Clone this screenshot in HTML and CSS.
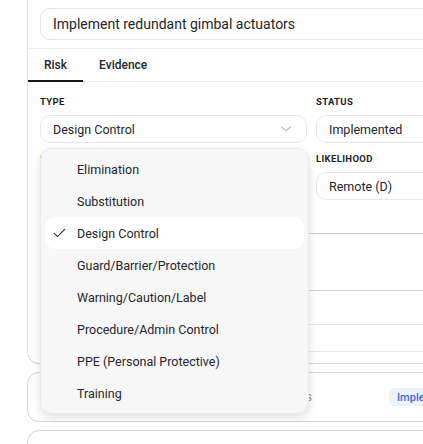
FILE: index.html
```html
<!DOCTYPE html>
<html lang="en">
<head>
    <meta charset="UTF-8">
    <meta name="viewport" content="width=device-width, initial-scale=1.0">
    <title>Mitigation</title>
    <link rel="stylesheet" href="styles.css">
</head>
<body>
    <div class="page">
        <section class="card card-open">
            <div class="title-row">
                <div class="title-input">Implement redundant gimbal actuators</div>
            </div>
            <nav class="tabs">
                <span class="tab active">Risk</span>
                <span class="tab">Evidence</span>
            </nav>
            <div class="form">
                <div class="grid">
                    <div class="field">
                        <label>Type</label>
                        <div class="select">
                            <span>Design Control</span>
                            <svg class="chevron" width="12" height="8" viewBox="0 0 12 8"><path d="M1 1.5l5 4.5 5-4.5" fill="none" stroke="#b9bbc3" stroke-width="1.1"/></svg>
                        </div>
                    </div>
                    <div class="field">
                        <label>Status</label>
                        <div class="select"><span>Implemented</span></div>
                    </div>
                    <div class="field">
                        <label>Severity</label>
                        <div class="select"><span>Critical (II)</span></div>
                    </div>
                    <div class="field">
                        <label>Likelihood</label>
                        <div class="select"><span>Remote (D)</span></div>
                    </div>
                </div>
                <div class="field notes">
                    <label>Notes</label>
                    <div class="textarea"></div>
                </div>
                <div class="meta"></div>
                <div class="meta last"></div>
            </div>

            <!-- open list for the Type select -->
            <ul class="menu">
                <li>Elimination</li>
                <li>Substitution</li>
                <li class="selected">
                    <svg class="check" width="13" height="10" viewBox="0 0 13 10"><path d="M1 5.2l3.6 3.4L12 1.2" fill="none" stroke="#2a2a30" stroke-width="1.1"/></svg>
                    Design Control
                </li>
                <li>Guard/Barrier/Protection</li>
                <li>Warning/Caution/Label</li>
                <li>Procedure/Admin Control</li>
                <li>PPE (Personal Protective)</li>
                <li>Training</li>
            </ul>
        </section>

        <section class="card row">
            <span class="row-title">Operator training records</span>
            <span class="badge">Implemented</span>
        </section>

        <section class="card row"></section>
    </div>
</body>
</html>
```

FILE: styles.css
```css
* {
    margin: 0;
    padding: 0;
    box-sizing: border-box;
}

html, body {
    height: 100%;
    overflow: hidden;
    background: #fff;
    font-family: Roboto, "Noto Sans", sans-serif;
    color: #25262b;
}

.page {
    padding-left: 27px;
    width: 760px;
    display: flex;
    flex-direction: column;
    gap: 8px;
}

.card {
    border: 1px solid #d3d5dd;
    border-radius: 12px;
}

.card-open {
    position: relative;
    border-top: none;
    border-color: #dcdde5;
    border-bottom-color: #d0d2da;
    border-radius: 0 0 12px 12px;
}

.title-row {
    padding: 8px 0 8px 12px;
    border-bottom: 1px solid #eeeef2;
}

.title-input {
    height: 32px;
    padding-left: 12px;
    border: 1px solid #e4e6ee;
    border-radius: 10px;
    display: flex;
    align-items: center;
    font-size: 14px;
}

.tabs {
    display: flex;
    height: 33px;
    border-bottom: 1px solid #ececf0;
}

.tab {
    padding: 0 16px;
    display: flex;
    align-items: center;
    font-size: 12px;
    font-weight: 500;
    margin-bottom: -1px;
    border-bottom: 2px solid transparent;
}

.tab.active {
    border-bottom-color: #16171b;
}

.form {
    padding: 14px 0 0 12px;
}

.grid {
    display: grid;
    grid-template-columns: 267px 267px;
    column-gap: 9px;
    row-gap: 10px;
}

.field label {
    display: block;
    height: 12px;
    line-height: 12px;
    margin-bottom: 7px;
    font-size: 9.5px;
    font-weight: 700;
    letter-spacing: 0.35px;
    text-transform: uppercase;
    color: #1e1f24;
}

.select {
    height: 28px;
    padding: 0 14px 0 12px;
    border: 1px solid #e6e7ee;
    border-radius: 10px;
    display: flex;
    align-items: center;
    justify-content: space-between;
    font-size: 12.5px;
}

.notes {
    margin-top: 14px;
    width: 543px;
}

.textarea {
    height: 58px;
    border: 1px solid #d2d4dc;
    border-radius: 10px;
}

.meta {
    margin-top: 33px;
    height: 27px;
    border-top: 1px solid #e7e7eb;
}

.meta.last {
    margin-top: 0;
    height: 12px;
}

.menu {
    position: absolute;
    left: 12px;
    top: 148px;
    width: 269px;
    padding: 4px;
    list-style: none;
    background: #f7f7f7;
    border: 1px solid #ebebed;
    border-radius: 12px;
    box-shadow: 0 4px 10px rgba(0, 0, 0, 0.12);
}

.menu li {
    position: relative;
    height: 32px;
    padding-left: 32px;
    display: flex;
    align-items: center;
    font-size: 12.5px;
    border-radius: 10px;
}

.menu li.selected {
    background: #fff;
}

.check {
    position: absolute;
    left: 8px;
    top: 11px;
}

.row {
    height: 50px;
    padding-left: 12px;
    display: flex;
    align-items: center;
}

.row-title {
    width: 272px;
    text-align: right;
    font-size: 12px;
    color: #8a8c94;
}

.badge {
    margin-left: 77px;
    height: 18px;
    padding: 0 8px;
    display: flex;
    align-items: center;
    border-radius: 5px;
    background: #edf3fe;
    color: #3d63dd;
    font-size: 11px;
    font-weight: 500;
}
```
